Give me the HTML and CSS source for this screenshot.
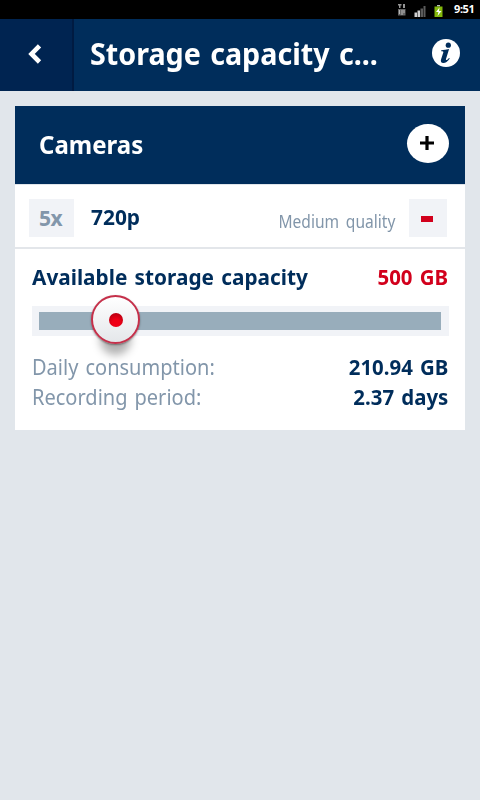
FILE: index.html
```html
<!DOCTYPE html>
<html lang="en">
<head>
  <meta charset="UTF-8" />
  <meta name="viewport" content="width=device-width, initial-scale=1.0"/>
  <title>Storage capacity calculator</title>
  <link rel="stylesheet" href="styles.css">
</head>
<body>

  <!-- Status bar -->
  <div class="status-bar">
    <svg class="status-icons" width="50" height="16" viewBox="0 0 50 16">
      <path d="M0 2h3.500v1.500H2.500V6H1V3.500H0zM5 2h2v4H5z" fill="#959595"/>
      <path d="M0 7h7.500v6.500H0z" fill="#666"/>
      <path d="M1.500 8v4M4 8v5M6 8v3" stroke="#b5b5b5"/>
      <path d="M16.500 10.500H19V15h-2.500zM19.500 8.500H22V15h-2.500z" fill="#d0d0d0"/>
      <path d="M22.500 6.500H25V15h-2.500zM25.500 4h2v11h-2z" fill="#5b5b5b"/>
      <path d="M39 3h3V4.500h-3z" fill="#bbb"/>
      <path d="M36.500 4.500h8V15h-8z" fill="#83b80b"/>
      <path d="M41.500 5.500L38 10h2.500l-1 4 4-5H41z" fill="#fff"/>
    </svg>
    <span class="clock">9:51</span>
  </div>

  <!-- Title bar -->
  <header class="header">
    <button class="back-btn" title="Back">
      <svg width="14" height="20" viewBox="0 0 14 20">
        <path d="M11.500 1.800L3.500 10l8 8" fill="none" stroke="#fff" stroke-width="4.600"/>
      </svg>
    </button>
    <h1 class="title">Storage capacity c...</h1>
    <button class="info-btn" title="Info">
      <svg width="28" height="28" viewBox="0 0 28 28">
        <circle cx="14" cy="14" r="14" fill="#fff"/>
        <circle cx="16.300" cy="6.200" r="2.600" fill="#002d5b"/>
        <path d="M9.200 11.300c2.600-.2 5-.6 7.900-1.200l-3.100 10c-.4 1.400.6 1.500 3-1.200l.8.700c-2.300 3.300-4.500 4.500-6.500 4.400-2.200-.1-2.900-1.600-2.200-3.800l2.200-6.700c.3-1-.3-1.300-2.100-1.300z" fill="#002d5b"/>
      </svg>
    </button>
  </header>

  <main class="card">
    <div class="card-header">
      <h2>Cameras</h2>
      <button class="add-btn" title="Add camera">
        <svg width="14" height="14" viewBox="0 0 14 14">
          <path d="M0 7h14M7 0v14" stroke="#000" stroke-width="3.200"/>
        </svg>
      </button>
    </div>

    <div class="camera-row">
      <span class="count">5x</span>
      <span class="resolution">720p</span>
      <span class="quality">Medium quality</span>
      <button class="remove-btn" title="Remove camera"><span class="minus"></span></button>
    </div>

    <div class="storage">
      <div class="row available">
        <span class="available-label">Available storage capacity</span>
        <span class="value available-value">500 GB</span>
      </div>

      <div class="slider">
        <div class="track"></div>
        <div class="knob-shadow"></div>
        <div class="knob"><span class="dot"></span></div>
      </div>

      <div class="row">
        <span class="label">Daily consumption:</span>
        <span class="value">210.94 GB</span>
      </div>
      <div class="row">
        <span class="label">Recording period:</span>
        <span class="value">2.37 days</span>
      </div>
    </div>
  </main>

</body>
</html>
```
FILE: styles.css
```css
:root {
  --navy: #002d5b;
  --red: #d2001c;
  --muted: #8296aa;
  --bg-color: #e1e6eb;
  --light: #f1f3f7;
}

* {
  box-sizing: border-box;
}

body {
  margin: 0;
  height: 800px;
  overflow: hidden;
  font-family: "Noto Sans", "Open Sans", sans-serif;
  background-color: var(--bg-color);
  color: var(--navy);
}

button {
  border: none;
  padding: 0;
  display: flex;
  align-items: center;
  justify-content: center;
  cursor: pointer;
}

.status-bar {
  height: 19px;
  padding-right: 5px;
  display: flex;
  align-items: center;
  justify-content: flex-end;
  gap: 6px;
  background: #000;
  color: #fff;
}

.clock {
  width: 21px;
  padding-bottom: 1px;
  font-size: 11px;
  font-weight: 700;
  line-height: 18px;
  letter-spacing: -0.4px;
  white-space: nowrap;
}

.header {
  height: 72px;
  display: flex;
  align-items: center;
  background: var(--navy);
}

.back-btn {
  width: 74px;
  height: 72px;
  padding: 0 3px 3px 0;
  background: #002451;
  border-right: 2px solid #001b42;
}

/* text is slightly condensed, with wide word gaps */
.title {
  flex: 1;
  margin: 0 0 0 16px;
  padding-bottom: 5px;
  color: #fff;
  font-size: 31px;
  line-height: 40px;
  word-spacing: 2px;
  white-space: nowrap;
  transform: scaleX(0.925);
  transform-origin: left;
}

.info-btn {
  margin: 0 20px 4px 0;
  background: none;
}

.card {
  width: 450px;
  height: 324px;
  margin: 15px auto 0;
  background: #fff;
}

.card-header {
  height: 78px;
  padding: 0 16px 2px 24px;
  display: flex;
  align-items: center;
  justify-content: space-between;
  background: var(--navy);
  color: #fff;
}

.card-header h2 {
  margin: 0;
  font-size: 25px;
  line-height: 34px;
  transform: scaleX(0.96);
  transform-origin: left;
}

.add-btn {
  width: 42px;
  height: 39px;
  margin-bottom: 1px;
  padding: 0 3px 2px 0;
  border-radius: 50%;
  background: #fff;
}

.camera-row {
  height: 65px;
  padding: 0 18px 0 14px;
  display: flex;
  align-items: center;
  border-top: 1px solid #e0e5ea;
  border-bottom: 2px solid #e3e6ea;
}

.count {
  width: 45px;
  height: 38px;
  margin-top: 4px;
  padding-right: 2px;
  line-height: 38px;
  text-align: center;
  background: var(--light);
  color: var(--muted);
  font-size: 21px;
  font-weight: 700;
  letter-spacing: -0.5px;
}

.resolution {
  margin: 0 0 1px 17px;
  font-size: 22px;
  font-weight: 700;
  line-height: 30px;
  transform: scaleX(0.95);
  transform-origin: left;
}

.quality {
  margin: 10px 14px 0 auto;
  color: var(--muted);
  font-size: 17.5px;
  line-height: 24px;
  word-spacing: 3px;
  transform: scaleX(0.89);
  transform-origin: right;
}

.remove-btn {
  width: 38px;
  height: 38px;
  margin-top: 4px;
  padding-right: 2px;
  background: var(--light);
}

.minus {
  width: 12px;
  height: 6px;
  margin-top: 2px;
  background: var(--red);
}

.storage {
  padding: 12px 17px 0;
}

.row {
  height: 30px;
  display: flex;
  justify-content: space-between;
  font-size: 22px;
  line-height: 30px;
  white-space: nowrap;
  word-spacing: 2px;
}

.available-label {
  font-weight: 700;
  transform: scaleX(0.945);
  transform-origin: left;
}

.label {
  color: var(--muted);
  transform: scaleX(0.91);
  transform-origin: left;
}

.value {
  font-weight: 700;
  transform: scaleX(0.928);
  transform-origin: right;
}

.available-value {
  color: var(--red);
}

.slider {
  position: relative;
  width: 417px;
  height: 30px;
  margin: 15px 0;
  padding: 6px 8px 6px 7px;
  background: var(--light);
}

.track {
  height: 18px;
  background: #98adbb;
}

.knob {
  position: absolute;
  left: 59px;
  top: -11px;
  width: 49px;
  height: 49px;
  display: flex;
  align-items: center;
  justify-content: center;
  border: 2px solid #c5304a;
  border-radius: 50%;
  background: linear-gradient(#fff, #e4e7ea);
  box-shadow: 0 1px 2px rgba(0, 0, 0, 0.4);
}

.knob-shadow {
  position: absolute;
  left: 68px;
  top: 18px;
  width: 31px;
  height: 31px;
  border-radius: 50%;
  background: rgba(0, 0, 0, 0.3);
  filter: blur(4px);
}

.dot {
  width: 14px;
  height: 14px;
  border-radius: 50%;
  background: radial-gradient(circle at 50% 70%, #f00016 30%, #a30010 100%);
}
```
